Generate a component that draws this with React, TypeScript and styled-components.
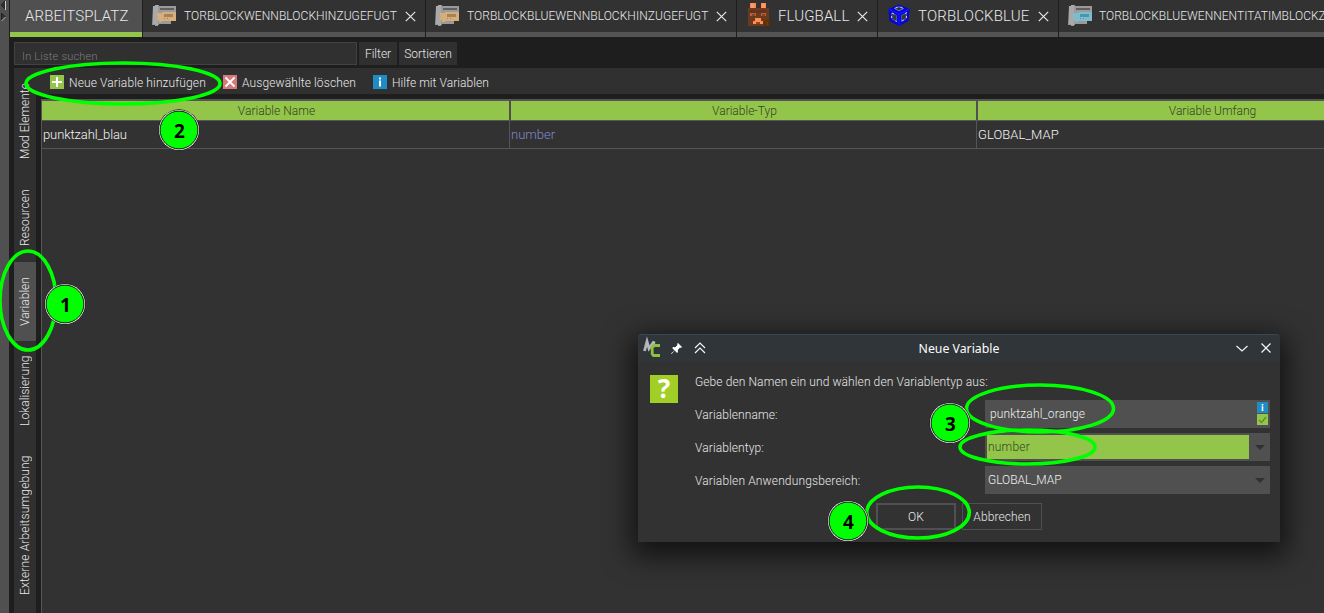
import React from "react";
import styled, { createGlobalStyle } from "styled-components";

const GREEN = "#93c54b";
const MARK = "#00ff00";

const Global = createGlobalStyle`
  * { box-sizing: border-box; }
  body { margin: 0; background: #1e1e1e; overflow: hidden; }
`;

const Screen = styled.div`
  position: relative;
  display: flex;
  width: 1324px;
  height: 613px;
  overflow: hidden;
  background: #1e1e1e;
  color: #e8e8e8;
  font-family: Roboto, "Liberation Sans", sans-serif;
  font-weight: 300;
  font-size: 12px;
`;

const Label = styled.span<{ $size?: number; $ls?: number }>`
  font-size: ${(p) => p.$size ?? 12}px;
  letter-spacing: ${(p) => p.$ls ?? 0.09}px;
  line-height: 16px;
  white-space: nowrap;
`;

const Splitter = styled.div`
  flex: none;
  width: 9px;
  background: #505050;
`;

const Main = styled.div`
  flex: 1;
  min-width: 0;
  display: flex;
  flex-direction: column;
`;

const TabBar = styled.div`
  display: flex;
  gap: 1px;
  height: 37px;
  padding-left: 1px;
  flex: none;
`;

const Tab = styled.div<{ $width: number; $active?: boolean }>`
  flex: none;
  display: flex;
  align-items: center;
  width: ${(p) => p.$width}px;
  height: 37px;
  padding-left: ${(p) => (p.$active ? 15 : 9)}px;
  background: ${(p) => (p.$active ? "#505050" : "#323232")};
  border-bottom: 5px solid ${(p) => (p.$active ? GREEN : "#535353")};
`;

const Icon = styled.svg`
  flex: none;
  display: block;
`;

const TabTitle = styled(Label)<{ $left: number; $width: number }>`
  flex: none;
  margin-left: ${(p) => p.$left}px;
  width: ${(p) => p.$width}px;
`;

const SearchRow = styled.div`
  display: flex;
  gap: 2px;
  padding: 5px 0 0 5px;
  height: 31px;
  flex: none;
`;

const SearchField = styled.div`
  width: 343px;
  height: 23px;
  padding: 6px 0 0 7px;
  background: #303030;
  border: 1px solid #424242;
  color: #7c7c7c;
  line-height: 14px;
`;

const FlatButton = styled.div<{ $width: number }>`
  width: ${(p) => p.$width}px;
  height: 23px;
  padding-top: 1px;
  display: flex;
  align-items: center;
  justify-content: center;
  background: #303030;
`;

const Workspace = styled.div`
  flex: 1;
  display: flex;
  padding-left: 5px;
  min-height: 0;
`;

const SideBar = styled.div`
  flex: none;
  width: 22px;
  background: #303030;
`;

const SideTab = styled.div<{ $height: number; $active?: boolean }>`
  width: 22px;
  height: ${(p) => p.$height}px;
  display: flex;
  align-items: center;
  justify-content: center;
  background: ${(p) => (p.$active ? "#505050" : "transparent")};
  writing-mode: vertical-rl;
  transform: rotate(180deg);
`;

const Panel = styled.div`
  flex: 1;
  min-width: 0;
  display: flex;
  flex-direction: column;
`;

const ToolBar = styled.div`
  display: flex;
  align-items: center;
  height: 26px;
  padding: 2px 0 0 14px;
  background: #303030;
  flex: none;
`;

const ToolItem = styled.div<{ $width: number }>`
  display: flex;
  align-items: flex-start;
  height: 14px;
  gap: 5px;
  width: ${(p) => p.$width}px;
`;

const Table = styled.div`
  flex: 1;
  margin: 5px 0 0 5px;
  border-left: 1px solid #555;
  border-top: 2px solid #555;
  background: #323232;
  overflow: hidden;
`;

const TableRow = styled.div<{ $head?: boolean }>`
  display: grid;
  grid-template-columns: 468px 467px 469px;
  width: 1404px;
  height: ${(p) => (p.$head ? 20 : 28)}px;
  border-bottom: 1px solid #555;
`;

const HeadCell = styled.div`
  display: flex;
  align-items: center;
  justify-content: center;
  padding-left: 2px;
  background: ${GREEN};
  color: #34421f;
  border-right: 1px solid #505050;
  & + & { border-left: 1px solid #505050; }
`;

const Cell = styled.div<{ $color?: string }>`
  display: flex;
  align-items: center;
  padding-left: 1px;
  border-right: 1px solid #555;
  color: ${(p) => p.$color ?? "#f4f4f4"};
`;

const Dialog = styled.div`
  position: absolute;
  left: 638px;
  top: 334px;
  width: 642px;
  height: 208px;
  background: #323232;
  border-radius: 4px 4px 0 0;
  box-shadow: 0 8px 28px 6px rgba(0, 0, 0, 0.65);
`;

const DialogBar = styled.div`
  display: grid;
  grid-template-columns: 100px 1fr 100px;
  align-items: center;
  height: 28px;
  background: #2f3539;
  border-top: 1px solid #3e474d;
  border-radius: 4px 4px 0 0;
`;

const DialogTitle = styled.div`
  text-align: center;
  font: 400 12.3px/18px "Noto Sans", sans-serif;
  color: #fcfcfc;
`;

const DialogBody = styled.div`
  display: grid;
  grid-template-columns: 45px 1fr;
  padding: 9px 10px 0 12px;
`;

const Question = styled.div`
  width: 28px;
  height: 28px;
  margin-top: 4px;
  background: #a2cf25;
  color: #fff;
  font: 700 26px/27px "Noto Sans", sans-serif;
  text-align: center;
`;

const Form = styled.div`
  display: flex;
  flex-direction: column;
`;

const Prompt = styled.div`
  display: flex;
  align-items: center;
  height: 20px;
  padding-top: 2px;
  margin-bottom: 9px;
`;

const FormRow = styled.div`
  display: grid;
  grid-template-columns: 290px 285px;
  align-items: center;
  height: 28px;
  margin-bottom: 5px;
`;

const FieldLabel = styled(Label)`
  padding-top: 2px;
`;

const Field = styled.div<{ $pad: number }>`
  display: flex;
  align-items: center;
  height: 28px;
  padding-left: ${(p) => p.$pad}px;
  background: #505050;
`;

const FieldText = styled.div<{ $selected?: boolean }>`
  flex: 1;
  display: flex;
  align-items: center;
  height: 24px;
  padding-left: 1px;
  background: ${(p) => (p.$selected ? GREEN : "transparent")};
  color: ${(p) => (p.$selected ? "#34451e" : "#f0f0f0")};
`;

const Hints = styled.div`
  display: flex;
  flex-direction: column;
  gap: 1px;
  width: 13px;
  padding-bottom: 1px;
`;

const Arrow = styled.svg`
  flex: none;
  width: 21px;
  height: 28px;
`;

const Buttons = styled.div`
  display: flex;
  gap: 6px;
  padding: 4px 0 0 181px;
`;

const DialogButton = styled.div<{ $primary?: boolean }>`
  width: 80px;
  height: 27px;
  display: flex;
  align-items: center;
  justify-content: center;
  border: ${(p) => (p.$primary ? 2 : 1)}px solid #505050;
`;

const Overlay = styled.svg`
  position: absolute;
  left: 0;
  top: 0;
  pointer-events: none;
`;

const ScriptIcon = ({ tint, dark }: { tint: string; dark: string }) => (
  <Icon width="24" height="22" viewBox="0 0 24 22">
    <path d="M1 1h2v-1h4v1h17v6h-2v8h-3v4h-12v1h-1v1h-3v-1h-3z" fill="#9a9a9a" />
    <path d="M1 1h2v-1h3v20h-3v-1h-2z" fill="#a9a9a9" />
    <path d="M8 3h14v2h-14z" fill="#606060" />
    <path d="M5 8h5v-1h14v9h-14v1h-3v-2h-2v-2h1v-2h-1z" fill={tint} />
    <path d="M12 9h9v3h-9zM12 13h1v1h-1zM15 13h1v1h-1z" fill={dark} />
  </Icon>
);

const CreatureIcon = () => (
  <Icon width="24" height="26" viewBox="0 0 24 26">
    <path d="M4 0h6v5h-6zM15 0h5v5h-5z" fill="#ff8a4c" />
    <path d="M5 1h3v4h-3zM16 1h3v4h-3z" fill="#ff9a62" />
    <path d="M2 5h21v18h-21z" fill="#6b3820" />
    <path d="M4 7h16v3h-16z" fill="#62321d" />
    <path d="M4 10h6v3h-6zM15 10h5v3h-5z" fill="#b9603a" />
    <path d="M6 11h3v2h-3zM16 11h3v2h-3z" fill="#84452b" />
    <path d="M9 15h6v3h2v3h-10v-3h2z" fill="#ff8e51" />
    <path d="M10 19h4v2h-4z" fill="#8b482a" />
    <circle cx="20.700" cy="20" r="3.300" fill="#5e3003" />
    <path d="M19.500 18.500l2 1-1 1.500 2 1" stroke="#7e4305" fill="none" />
  </Icon>
);

const CubeIcon = () => (
  <Icon width="24" height="24" viewBox="0 0 24 24">
    <path d="M12 0.500L22.500 5L21.500 17L12 22L2.500 17L1.500 5Z" fill="#0505d8" />
    <path d="M12 2.800l4.500 1.800-4.500 2.200-4.500-2.200z" fill="#30343e" stroke="#7f90c8" strokeWidth=".8" />
    <path d="M4.500 9l5 2.300v6l-4.300-2.200zM14.500 11.300l5-2.300-.7 6.100-4.300 2.200z" fill="#33363a" stroke="#5566a8" strokeWidth=".8" />
    <path d="M8.500 3.800l2-.8M13.500 3l2 .8M5 9l2 1M8.500 17l1.300.6M14.800 17l2-1M18 9.500l2-1M4.600 12v2M19.500 12v2" stroke="#c5d2ef" strokeWidth="1" fill="none" />
    <path d="M2 5.500l10 4.500 10-4.500M12 10v11" stroke="#1515f5" strokeWidth="1.500" fill="none" />
  </Icon>
);

const Close = () => (
  <Icon width="11" height="11" viewBox="0 0 11 11">
    <path d="M.8 .8l9.4 9.4M10.2 .8l-9.4 9.4" stroke="#e8e8e8" strokeWidth="1.200" />
  </Icon>
);

const PlusIcon = () => (
  <Icon width="14" height="14">
    <rect width="14" height="14" fill={GREEN} />
    <path d="M7 2v10M2 7h10" stroke="#fff" strokeWidth="2" />
  </Icon>
);

const DeleteIcon = () => (
  <Icon width="14" height="14">
    <rect width="14" height="14" fill="#d47a7a" />
    <path d="M2.5 2.5l9 9M11.5 2.5l-9 9" stroke="#fff" strokeWidth="1.8" />
  </Icon>
);

const InfoIcon = ({ size = 14 }: { size?: number }) => (
  <Icon width={size} height={size} viewBox="0 0 14 14">
    <rect width="14" height="14" fill="#1f8dc4" />
    <path d="M6 2.5h2v2h-2zM6 5.5h2v6h-2z" fill="#fff" />
  </Icon>
);

const tabs = [
  { title: "TORBLOCKWENNBLOCKHINZUGEFUGT", icon: <ScriptIcon tint="#d5ae7b" dark="#a3835b" />, width: 282, size: 12, ls: 0.06, left: 8, text: 221 },
  { title: "TORBLOCKBLUEWENNBLOCKHINZUGEFUGT", icon: <ScriptIcon tint="#d5ae7b" dark="#a3835b" />, width: 310, size: 12, ls: 0.06, left: 8, text: 249 },
  { title: "FLUGBALL", icon: <CreatureIcon />, width: 140, size: 15, ls: 0.12, left: 8, text: 79 },
  { title: "TORBLOCKBLUE", icon: <CubeIcon />, width: 180, size: 15, ls: 0.15, left: 7, text: 120 },
  { title: "TORBLOCKBLUEWENNENTITATIMBLOCKZ", icon: <ScriptIcon tint="#7dbccd" dark="#4e94a8" />, width: 350, size: 12, ls: 0.03, left: 7, text: 300 },
];

const sideTabs = [
  { title: "Mod Elemente", height: 106, ls: 0 },
  { title: "Resourcen", height: 88, ls: 0.05 },
  { title: "Variablen", height: 79, ls: 0, active: true },
  { title: "Lokalisierung", height: 99, ls: 0.07 },
  { title: "Externe Arbeitsumgebung", height: 171, ls: 0.15 },
];

const ellipses = [
  [28, 300.5, 28, 49.5],
  [123, 83.5, 97, 20.5],
  [1040, 408.5, 73.5, 23.5],
  [1027.5, 447, 67.5, 17],
  [918, 512.5, 51.3, 25.5],
];

const markers = [
  [65, 304],
  [179, 130],
  [950, 423],
  [848, 521],
];

export default function App() {
  return (
    <Screen>
      <Global />
      <Splitter>
        <Icon width="9" height="24">
          <path d="M5 1L1 5l4 4z" fill="#333" stroke="#222" />
          <path d="M5.5 1v9" stroke="#ccc" />
          <path d="M1.5 13v8l4-4z" fill="#333" stroke="#222" />
          <path d="M1.5 21l4-4" stroke="#ccc" />
        </Icon>
      </Splitter>
      <Main>
        <TabBar>
          <Tab $width={132} $active>
            <Label $size={15} $ls={0.15}>ARBEITSPLATZ</Label>
          </Tab>
          {tabs.map((t) => (
            <Tab key={t.title} $width={t.width}>
              {t.icon}
              <TabTitle $size={t.size} $ls={t.ls} $left={t.left} $width={t.text}>{t.title}</TabTitle>
              <Close />
            </Tab>
          ))}
        </TabBar>
        <SearchRow>
          <SearchField><Label $size={11} $ls={0.22}>In Liste suchen</Label></SearchField>
          <FlatButton $width={38}><Label $ls={0}>Filter</Label></FlatButton>
          <FlatButton $width={58}><Label $ls={0}>Sortieren</Label></FlatButton>
        </SearchRow>
        <Workspace>
          <SideBar>
            {sideTabs.map((t) => (
              <SideTab key={t.title} $height={t.height} $active={t.active}>
                <Label $ls={t.ls}>{t.title}</Label>
              </SideTab>
            ))}
          </SideBar>
          <Panel>
            <ToolBar>
              <ToolItem $width={173}><PlusIcon /><Label $ls={0.12}>Neue Variable hinzufügen</Label></ToolItem>
              <ToolItem $width={150}><DeleteIcon /><Label $ls={0.11}>Ausgewählte löschen</Label></ToolItem>
              <ToolItem $width={150}><InfoIcon /><Label $ls={0.05}>Hilfe mit Variablen</Label></ToolItem>
            </ToolBar>
            <Table>
              <TableRow $head>
                <HeadCell><Label $ls={0.02}>Variable Name</Label></HeadCell>
                <HeadCell><Label $ls={0}>Variable-Typ</Label></HeadCell>
                <HeadCell><Label $ls={0}>Variable Umfang</Label></HeadCell>
              </TableRow>
              <TableRow>
                <Cell><Label $size={13} $ls={-0.1}>punktzahl_blau</Label></Cell>
                <Cell $color="#8088cc"><Label $size={13} $ls={0}>number</Label></Cell>
                <Cell><Label $size={13} $ls={0.05}>GLOBAL_MAP</Label></Cell>
              </TableRow>
            </Table>
          </Panel>
        </Workspace>
      </Main>

      <Dialog>
        <DialogBar>
          <Icon width="100" height="27" viewBox="0 0 100 27">
            <path d="M6.500 16L9 6.500l2 7 5-7-1 6" fill="none" stroke="#b5b8ba" strokeWidth="2.800" />
            <path d="M22 10.500h-6l-1.800 1.500v7l1.300 1.500h6.500" fill="none" stroke="#8bc33d" strokeWidth="2.800" />
            <path d="M40 8l4 4-1 1-1-.4-2.2 2.3.2 2-1 1-2.3-2.3-2.8 3.2-.8.2.2-.8 3.2-2.8-2.3-2.300 1-1 2 .2L39.500 10l-.5-1z" fill="#fff" />
            <path d="M57 13l5-5 5 5M57 18l5-5 5 5" fill="none" stroke="#f5f5f5" strokeWidth="1.2" />
          </Icon>
          <DialogTitle>Neue Variable</DialogTitle>
          <Icon width="100" height="27" viewBox="0 0 100 27">
            <path d="M56.500 11l5.500 5 5.500-5M81.500 8.500l9 9M90.500 8.500l-9 9" fill="none" stroke="#f5f5f5" strokeWidth="1.200" />
          </Icon>
        </DialogBar>
        <DialogBody>
          <Question>?</Question>
          <Form>
            <Prompt><Label $ls={0.1}>Gebe den Namen ein und wählen den Variablentyp aus:</Label></Prompt>
            <FormRow>
              <FieldLabel>Variablenname:</FieldLabel>
              <Field $pad={4}>
                <FieldText><Label $ls={0.15}>punktzahl_orange</Label></FieldText>
                <Hints>
                  <InfoIcon size={11} />
                  <Icon width="11" height="11">
                    <rect width="11" height="11" fill={GREEN} />
                    <path d="M2 6l2.500 2.500L9 3" fill="none" stroke="#5f8e2b" strokeWidth="1.300" />
                  </Icon>
                </Hints>
              </Field>
            </FormRow>
            <FormRow>
              <FieldLabel>Variablentyp:</FieldLabel>
              <Field $pad={2}>
                <FieldText $selected><Label $ls={0.2}>number</Label></FieldText>
                <Arrow><path d="M6 12h10l-5 5z" fill="#303030" /></Arrow>
              </Field>
            </FormRow>
            <FormRow>
              <FieldLabel $ls={0.14}>Variablen Anwendungsbereich:</FieldLabel>
              <Field $pad={2}>
                <FieldText><Label $ls={-0.05}>GLOBAL_MAP</Label></FieldText>
                <Arrow><path d="M6 12h10l-5 5z" fill="#303030" /></Arrow>
              </Field>
            </FormRow>
            <Buttons>
              <DialogButton $primary><Label>OK</Label></DialogButton>
              <DialogButton><Label>Abbrechen</Label></DialogButton>
            </Buttons>
          </Form>
        </DialogBody>
      </Dialog>

      <Overlay width="1324" height="613">
        {ellipses.map(([cx, cy, rx, ry], i) => (
          <ellipse key={i} cx={cx} cy={cy} rx={rx} ry={ry} fill="none" stroke={MARK} strokeWidth="3.600" />
        ))}
        {markers.map(([cx, cy], i) => (
          <g key={i}>
            <circle cx={cx} cy={cy} r="20.700" fill="#222" />
            <circle cx={cx} cy={cy} r="20" fill="#fff" />
            <circle cx={cx} cy={cy} r="18.900" fill={MARK} stroke="#111" strokeWidth="1" />
            <text x={cx + 0.5} y={cy + 8} textAnchor="middle" fontFamily="Noto Sans, sans-serif" fontWeight="700" fontSize="19" fill="#000">{i + 1}</text>
          </g>
        ))}
      </Overlay>
    </Screen>
  );
}
